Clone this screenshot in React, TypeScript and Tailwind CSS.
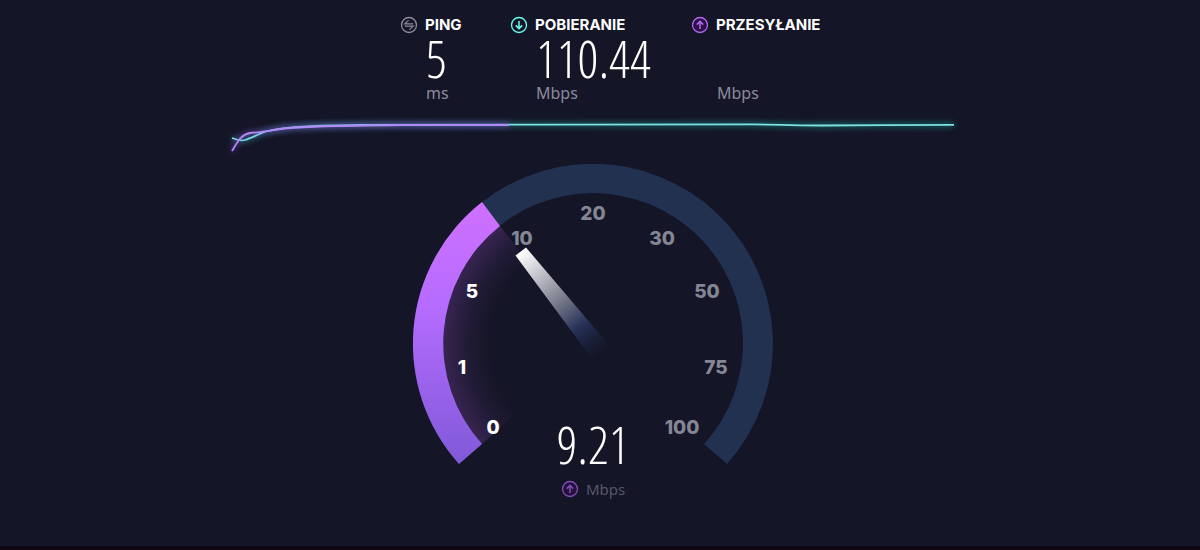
import type { ReactNode } from "react";

// Dial geometry: centre (180, 180), outer radius 180, inner radius 150
const ticks = [
  { label: "0", x: 80, y: 270 },
  { label: "1", x: 49, y: 210 },
  { label: "5", x: 59, y: 134 },
  { label: "10", x: 109, y: 81 },
  { label: "20", x: 180, y: 56 },
  { label: "30", x: 249, y: 81 },
  { label: "50", x: 294, y: 134 },
  { label: "75", x: 303, y: 210 },
  { label: "100", x: 269, y: 270 },
];

const speed = 9.21;

const PingIcon = () => (
  <svg viewBox="0 0 18 18" className="size-[18px] shrink-0 text-[#8b8b9c]" fill="none" stroke="currentColor" aria-hidden="true">
    <circle cx="9" cy="9" r="7.5" strokeWidth="1.3" />
    <path d="M13.2 7.8H4.8L8.6 4.4M4.8 10.2h8.4l-3.8 3.4" strokeWidth="1.2" />
  </svg>
);

const DownloadIcon = () => (
  <svg viewBox="0 0 18 18" className="size-[18px] shrink-0 text-[#6afff3]" fill="none" stroke="currentColor" aria-hidden="true">
    <circle cx="9" cy="9" r="7.5" strokeWidth="1.3" />
    <path d="M9 5v7.4M5.8 9.4L9 12.6l3.2-3.2" strokeWidth="1.5" />
  </svg>
);

const UploadIcon = () => (
  <svg viewBox="0 0 18 18" className="size-[18px] shrink-0 text-[#b168ee]" fill="none" stroke="currentColor" aria-hidden="true">
    <circle cx="9" cy="9" r="7.5" strokeWidth="1.3" fill="#2c1047" />
    <path d="M9 13V5.6M5.8 8.6L9 5.4l3.2 3.2" strokeWidth="1.5" />
  </svg>
);

type StatProps = {
  icon: ReactNode;
  label: string;
  value?: string;
  unit: string;
};

const Stat = ({ icon, label, value, unit }: StatProps) => (
  <div>
    <dt className="flex items-center gap-[7px] font-['Inter',sans-serif] text-[15px] leading-5 font-bold">
      {icon}
      {label}
    </dt>
    <dd className="pl-[26px]">
      <div className="h-12 font-['Open_Sans_Condensed_Light','Open_Sans_Condensed',sans-serif] text-[52px] leading-[46px] font-light">
        {value}
      </div>
      <div className="text-base leading-5 text-[#8b8b9c]">{unit}</div>
    </dd>
  </div>
);

const SpeedChart = () => (
  <svg viewBox="0 0 722 32" className="mt-[17px] block w-full overflow-visible" fill="none" aria-hidden="true">
    <path
      className="drop-shadow-[0_0_3px_#22d3c5]"
      d="M0 18C5 20 9 21 13 20C20 18 26 14 34 11.5C55 6 90 5.5 130 5C240 4 420 5 520 4.3C550 4.3 550 5.5 590 5.5C640 5.5 670 4.8 722 4.8"
      stroke="#7be3e4"
      strokeWidth="1.8"
    />
    <path
      className="drop-shadow-[0_0_3px_#a347f0]"
      d="M0 31C5 23 8 15 18 13C28 12.5 34 11 48 9C80 5.5 110 6 170 5L277 5"
      stroke="#b18af5"
      strokeWidth="1.8"
    />
  </svg>
);

const Gauge = () => (
  <svg viewBox="0 0 360 301" className="block w-full" role="img" aria-label="Mbps">
    <defs>
      <linearGradient id="progress" x1="0" y1="38" x2="0" y2="300" gradientUnits="userSpaceOnUse">
        <stop offset="0" stopColor="#cf70ff" />
        <stop offset="0.4" stopColor="#b56cff" />
        <stop offset="1" stopColor="#8059d8" />
      </linearGradient>
      <radialGradient id="glow" cx="180" cy="180" r="150" gradientUnits="userSpaceOnUse">
        <stop offset="0.68" stopColor="#a855d8" stopOpacity="0" />
        <stop offset="0.84" stopColor="#a855d8" stopOpacity="0.09" />
        <stop offset="1" stopColor="#a855d8" stopOpacity="0.24" />
      </radialGradient>
      <linearGradient id="needle" x1="108" y1="87" x2="189" y2="190" gradientUnits="userSpaceOnUse">
        <stop offset="0" stopColor="#ffffff" />
        <stop offset="0.15" stopColor="#d8d8de" />
        <stop offset="0.5" stopColor="#737686" />
        <stop offset="0.72" stopColor="#29345a" />
        <stop offset="1" stopColor="#1a2444" stopOpacity="0" />
      </linearGradient>
    </defs>
    <path d="M46 300A180 180 0 1 1 314 300L291 280A150 150 0 1 0 69 280Z" fill="#223150" />
    <path d="M180 180L69 280A150 150 0 0 1 87 62Z" fill="url(#glow)" />
    <path d="M46 300A180 180 0 0 1 69 38L87 62A150 150 0 0 0 69 280Z" fill="url(#progress)" />
    <path d="M102.5 91.5L113 83.5L196 181L182 199Z" fill="url(#needle)" />
    {ticks.map(({ label, x, y }) => (
      <text
        key={label}
        x={x}
        y={y}
        textAnchor="middle"
        className={
          Number(label) <= speed
            ? "fill-white font-['Inter',sans-serif] text-[19px] font-extrabold"
            : "fill-[#858693] font-['Inter',sans-serif] text-[19px] font-extrabold"
        }
      >
        {label}
      </text>
    ))}
  </svg>
);

export default function App() {
  return (
    <main className="flex min-h-screen flex-col border-b-4 border-[#0c0713] bg-[#141526] pt-[15px] pr-[14px] font-['Noto_Sans',sans-serif] text-white">
      <div className="mx-auto w-full max-w-[722px]">
        <dl className="ml-[168px] grid grid-cols-[110px_181px_auto] justify-start">
          <Stat icon={<PingIcon />} label="PING" value="5" unit="ms" />
          <Stat icon={<DownloadIcon />} label="POBIERANIE" value="110.44" unit="Mbps" />
          <Stat icon={<UploadIcon />} label="PRZESYŁANIE" unit="Mbps" />
        </dl>
        <SpeedChart />
      </div>

      <section className="mx-auto mt-3 w-full max-w-[360px]">
        <Gauge />
        <div className="-mt-12 text-center">
          <div className="font-['Open_Sans_Condensed_Light','Open_Sans_Condensed',sans-serif] text-[52px] leading-[54px] font-light">
            {speed}
          </div>
          <div className="mt-2 flex items-center justify-center gap-[7px] text-[15px] leading-5 text-[#565768]">
            <span className="opacity-70">
              <UploadIcon />
            </span>
            Mbps
          </div>
        </div>
      </section>
    </main>
  );
}
